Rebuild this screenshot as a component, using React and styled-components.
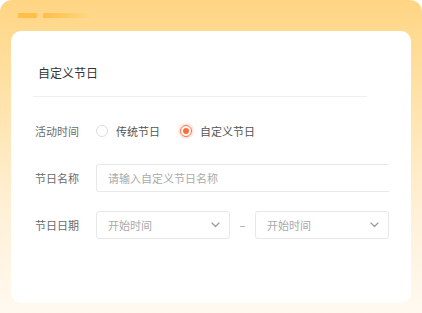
import React from 'react';
import styled, { createGlobalStyle } from 'styled-components';

const Global = createGlobalStyle`
  html, body { margin: 0; padding: 0; background: #fff; }
  body { font-family: "Noto Sans CJK SC", "Noto Sans", sans-serif; }
`;

// moldura laranja com gradiente
const Frame = styled.div`
  width: 422px;
  height: 313px;
  box-sizing: border-box;
  border-radius: 12px 12px 0 0;
  background: linear-gradient(180deg, #ffd583 0%, #ffe2a8 30%, #fff1da 70%, #fff9f0 100%);
  padding: 13px 11px 10px;
  display: flex;
  flex-direction: column;
`;

const Deco = styled.div`
  display: flex;
  gap: 6px;
  height: 5px;
  margin-left: 7px;
  margin-bottom: 13px;
`;

const Bar = styled.span`
  display: block;
  width: ${p => p.$w}px;
  height: 5px;
  background: ${p => p.$fade
    ? 'linear-gradient(90deg, #ffc04a 0%, #ffc85e 40%, rgba(255, 216, 138, 0) 100%)'
    : '#ffc04a'};
`;

const Card = styled.div`
  flex: 1;
  background: #fff;
  border-radius: 10px;
  padding: 0 22px 0 22px;
  overflow: hidden;
`;

const Title = styled.div`
  font-size: 12px;
  color: #333;
  padding: 34px 0 0 5px;
  line-height: 16px;
`;

const Divider = styled.div`
  height: 1px;
  background: #efefef;
  width: 334px;
  margin-top: 15px;
`;

const Form = styled.div`
  display: flex;
  flex-direction: column;
  padding-top: 20px;
  gap: 19px;
`;

const Row = styled.div`
  display: flex;
  align-items: center;
  height: 28px;
`;

const Label = styled.span`
  width: 61px;
  padding-left: 2px;
  font-size: 11px;
  color: #6b6b6b;
  flex-shrink: 0;
`;

const RadioGroup = styled.div`
  display: flex;
  align-items: center;
  gap: 20px;
`;

const RadioItem = styled.label`
  display: flex;
  align-items: center;
  gap: 8px;
  font-size: 11px;
  color: #555;
`;

const Dot = styled.span`
  width: 12px;
  height: 12px;
  box-sizing: border-box;
  border-radius: 50%;
  border: ${p => (p.$on ? '1.5px solid #ff6b3d' : '1px solid #dcdcdc')};
  box-shadow: ${p => (p.$on ? '0 0 0 2px rgba(255, 107, 61, 0.15)' : 'none')};
  display: flex;
  align-items: center;
  justify-content: center;
  &::after {
    content: '';
    display: ${p => (p.$on ? 'block' : 'none')};
    width: 6px;
    height: 6px;
    border-radius: 50%;
    background: #ff6b3d;
  }
`;

const Input = styled.div`
  width: 293px;
  height: 28px;
  box-sizing: border-box;
  border: 1px solid #e8e8e8;
  border-right: none;
  border-radius: 3px 0 0 3px;
  padding-left: 11px;
  display: flex;
  align-items: center;
  font-size: 11px;
  color: #aaa;
`;

const Select = styled.div`
  width: 134px;
  height: 28px;
  box-sizing: border-box;
  border: 1px solid #e8e8e8;
  border-radius: 3px;
  padding: 0 9px 0 11px;
  display: flex;
  align-items: center;
  justify-content: space-between;
  font-size: 11px;
  color: #aaa;
`;

const Dash = styled.span`
  width: 25px;
  text-align: center;
  color: #999;
  font-size: 11px;
`;

const Chevron = () => (
  <svg width="9" height="6" viewBox="0 0 9 6" fill="none">
    <path d="M1 1l3.5 3.5L8 1" stroke="#999" strokeWidth="1.2" strokeLinecap="round" strokeLinejoin="round" />
  </svg>
);

export default function App() {
  return (
    <>
      <Global />
      <Frame>
        <Deco>
          <Bar $w={19} />
          <Bar $w={48} $fade />
        </Deco>
        <Card>
          <Title>自定义节日</Title>
          <Divider />
          <Form>
            <Row>
              <Label>活动时间</Label>
              <RadioGroup>
                <RadioItem><Dot />传统节日</RadioItem>
                <RadioItem><Dot $on />自定义节日</RadioItem>
              </RadioGroup>
            </Row>
            <Row>
              <Label>节日名称</Label>
              <Input>请输入自定义节日名称</Input>
            </Row>
            <Row>
              <Label>节日日期</Label>
              <Select>开始时间<Chevron /></Select>
              <Dash>–</Dash>
              <Select>开始时间<Chevron /></Select>
            </Row>
          </Form>
        </Card>
      </Frame>
    </>
  );
}
